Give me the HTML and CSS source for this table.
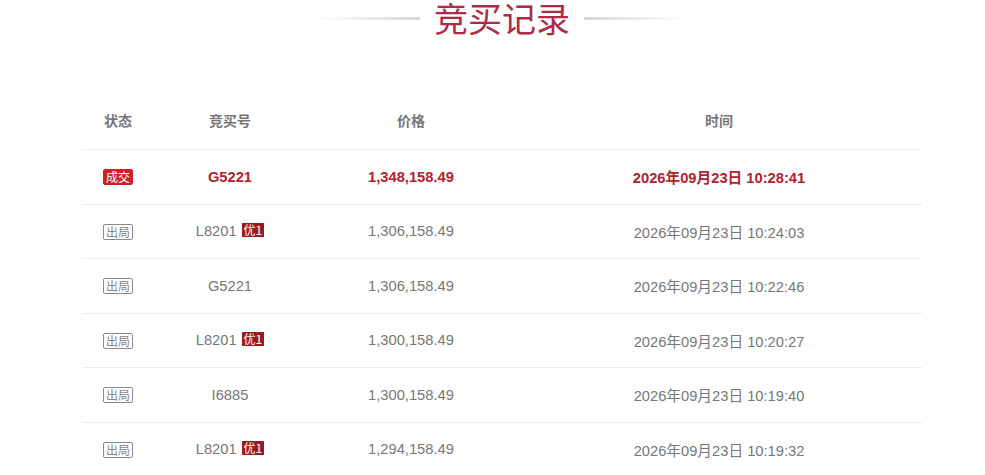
FILE: index.html
```html
<!DOCTYPE html>
<html lang="zh-CN">
<head>
<meta charset="utf-8">
<title>竞买记录</title>
<link rel="stylesheet" href="styles.css">
</head>
<body>
<div class="title-bar">
  <span class="deco deco-left"></span>
  <h2 class="title">竞买记录</h2>
  <span class="deco deco-right"></span>
</div>
<div class="records">
  <div class="row head">
    <div>状态</div><div>竞买号</div><div>价格</div><div>时间</div>
  </div>
  <div class="row win">
    <div><span class="tag tag-win">成交</span></div>
    <div>G5221</div>
    <div>1,348,158.49</div>
    <div>2026年09月23日 10:28:41</div>
  </div>
  <div class="row">
    <div><span class="tag tag-out">出局</span></div>
    <div>L8201<span class="pri">优1</span></div>
    <div>1,306,158.49</div>
    <div>2026年09月23日 10:24:03</div>
  </div>
  <div class="row">
    <div><span class="tag tag-out">出局</span></div>
    <div>G5221</div>
    <div>1,306,158.49</div>
    <div>2026年09月23日 10:22:46</div>
  </div>
  <div class="row">
    <div><span class="tag tag-out">出局</span></div>
    <div>L8201<span class="pri">优1</span></div>
    <div>1,300,158.49</div>
    <div>2026年09月23日 10:20:27</div>
  </div>
  <div class="row">
    <div><span class="tag tag-out">出局</span></div>
    <div>I6885</div>
    <div>1,300,158.49</div>
    <div>2026年09月23日 10:19:40</div>
  </div>
  <div class="row">
    <div><span class="tag tag-out">出局</span></div>
    <div>L8201<span class="pri">优1</span></div>
    <div>1,294,158.49</div>
    <div>2026年09月23日 10:19:32</div>
  </div>
</div>
</body>
</html>
```
FILE: styles.css
```css
html, body {
  margin: 0;
  padding: 0;
  background: #fff;
  font-family: "Liberation Sans", "Noto Sans CJK SC", sans-serif;
  color: #666;
  overflow: hidden;
}
.title-bar {
  display: flex;
  align-items: center;
  justify-content: center;
  height: 36px;
  margin-left: 19px;
}
.title {
  margin: 0 14px;
  font-size: 34px;
  line-height: 36px;
  font-weight: normal;
  color: #b02a44;
  font-family: "Noto Sans CJK SC", sans-serif;
}
.deco {
  display: block;
  width: 105px;
  height: 3px;
}
.deco-left {
  background: linear-gradient(to right, rgba(220,220,220,0), #d6d6d6);
}
.deco-right {
  background: linear-gradient(to right, #d6d6d6, rgba(220,220,220,0));
}
.records {
  margin: 57px 63px 0 82px;
  width: 840px;
}
.row {
  display: grid;
  grid-template-columns: 72px 152px 210px 1fr;
  align-items: center;
  text-align: center;
  height: 54.5px;
  box-sizing: border-box;
  border-top: 1px solid #ebebeb;
  font-size: 14.7px;
  color: #777;
}
.row.head {
  height: 56px;
  border-top: none;
  color: #777;
  font-weight: bold;
  font-size: 14px;
  padding-bottom: 3px;
}
.row.win {
  color: #b3222c;
  font-weight: bold;
}
.tag {
  display: inline-block;
  font-size: 12px;
  line-height: 14px;
  padding: 0 2px;
  border-radius: 2px;
  font-weight: normal;
  font-family: "Noto Sans CJK SC", sans-serif;
  vertical-align: middle;
}
.tag-win {
  background: #cf2128;
  color: #fff;
  border: 1px solid #cf2128;
}
.tag-out {
  border: 1px solid #8a8a8a;
  color: #888;
}
.pri {
  display: inline-block;
  margin-left: 5px;
  background: #9b1b1f;
  color: #fff;
  font-size: 12px;
  line-height: 14px;
  height: 14px;
  padding: 0 2px;
  vertical-align: 1px;
  font-family: "Noto Sans CJK SC", sans-serif;
}
```
